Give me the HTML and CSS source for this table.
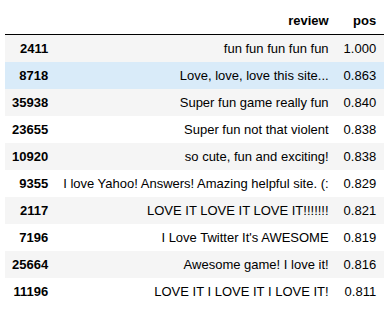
FILE: index.html
```html
<!DOCTYPE html>
<html>
<head>
<meta charset="utf-8">
<link rel="stylesheet" href="styles.css">
</head>
<body>
<table class="df">
  <thead>
    <tr><th class="idx"></th><th>review</th><th>pos</th></tr>
  </thead>
  <tbody>
    <tr><th class="idx">2411</th><td>fun fun fun fun fun</td><td>1.000</td></tr>
    <tr class="hover"><th class="idx">8718</th><td>Love, love, love this site...</td><td>0.863</td></tr>
    <tr><th class="idx">35938</th><td>Super fun game really fun</td><td>0.840</td></tr>
    <tr><th class="idx">23655</th><td>Super fun not that violent</td><td>0.838</td></tr>
    <tr><th class="idx">10920</th><td>so cute, fun and exciting!</td><td>0.838</td></tr>
    <tr><th class="idx">9355</th><td>I love Yahoo! Answers! Amazing helpful site. (:</td><td>0.829</td></tr>
    <tr><th class="idx">2117</th><td>LOVE IT LOVE IT LOVE IT!!!!!!!</td><td>0.821</td></tr>
    <tr><th class="idx">7196</th><td>I Love Twitter It's AWESOME</td><td>0.819</td></tr>
    <tr><th class="idx">25664</th><td>Awesome game! I love it!</td><td>0.816</td></tr>
    <tr><th class="idx">11196</th><td>LOVE IT I LOVE IT I LOVE IT!</td><td>0.811</td></tr>
  </tbody>
</table>
</body>
</html>
```
FILE: styles.css
```css
html, body {
  margin: 0;
  background: #ffffff;
}
body {
  padding: 7px 5px 0 5px;
  font-family: "Liberation Sans", Arial, sans-serif;
  font-size: 13px;
  color: #000000;
}
.df {
  border-collapse: collapse;
  border-spacing: 0;
  border: none;
}
.df th, .df td {
  padding: 6px 8px 6px 7px;
  line-height: 15px;
  text-align: right;
  vertical-align: middle;
  white-space: nowrap;
}
.df th {
  font-weight: bold;
}
.df td {
  font-weight: normal;
}
.df thead {
  border-bottom: 1px solid #000000;
}
.df tbody tr:nth-child(odd) {
  background: #f5f5f5;
}
.df tbody tr.hover {
  background: #d9ebf9;
}
```
